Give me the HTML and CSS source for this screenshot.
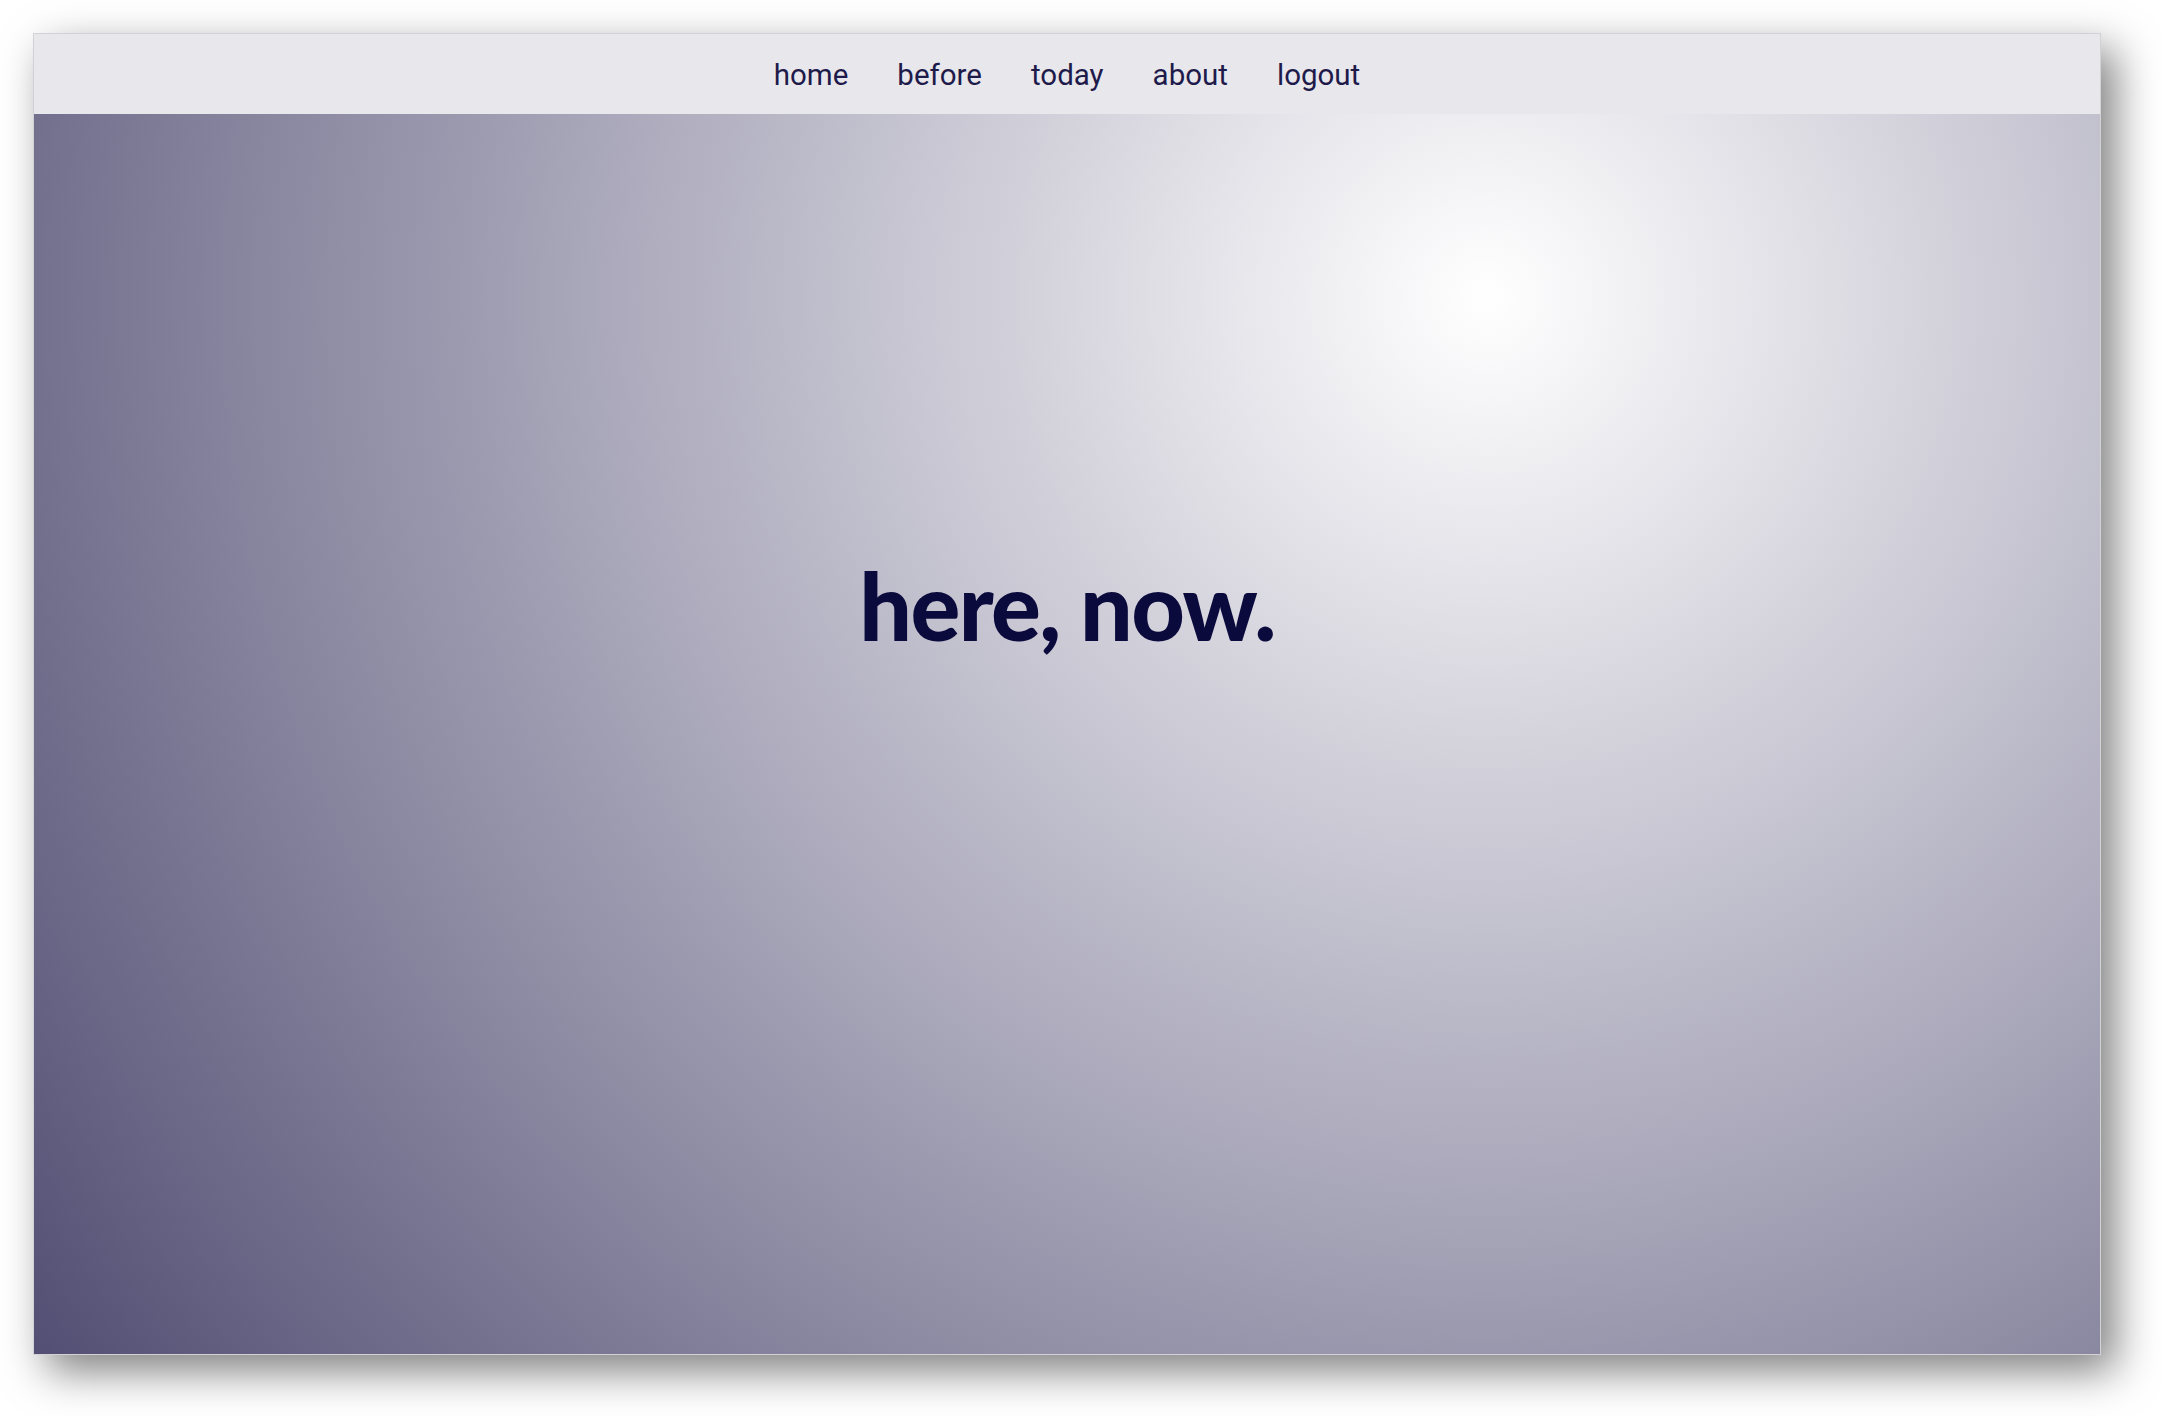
FILE: index.html
```html
<!DOCTYPE html>
<html lang="en">
<head>
<meta charset="utf-8">
<title>here, now.</title>
<link rel="stylesheet" href="styles.css">
</head>
<body>
<div class="card">
  <nav class="nav">
    <a class="nav-link" href="#">home</a>
    <a class="nav-link" href="#">before</a>
    <a class="nav-link" href="#">today</a>
    <a class="nav-link" href="#">about</a>
    <a class="nav-link" href="#">logout</a>
  </nav>
  <main class="hero">
    <h1 class="title">here, now.</h1>
  </main>
</div>
</body>
</html>
```

FILE: styles.css
```css
html, body {
  margin: 0;
  padding: 0;
  background: #ffffff;
}
body {
  width: 2162px;
  height: 1416px;
  overflow: hidden;
  font-family: Roboto, "Liberation Sans", sans-serif;
}
.card {
  margin: 33px 0 0 33px;
  width: 2068px;
  height: 1322px;
  box-sizing: border-box;
  border: 1px solid #d2d2d6;
  display: flex;
  flex-direction: column;
  box-shadow: 14px 16px 40px rgba(0, 0, 0, 0.5);
}
.nav {
  height: 80px;
  flex: none;
  background: #e8e7ec;
  display: flex;
  justify-content: center;
  align-items: center;
  gap: 49px;
}
.nav-link {
  font-family: Roboto, sans-serif;
  font-size: 29.5px;
  color: #1e1b4b;
  text-decoration: none;
  padding-top: 1px;
}
.hero {
  flex: 1;
  background: radial-gradient(circle farthest-corner at 70.3% 14.8%, #ffffff 0%, #534f74 100%);
  display: flex;
  justify-content: center;
  align-items: flex-start;
  padding-top: 436px;
}
.title {
  margin: 0;
  font-family: Lato, sans-serif;
  font-weight: 900;
  font-size: 93px;
  line-height: 1.2;
  color: #0b0a3d;
  letter-spacing: -1.6px;
}
```
